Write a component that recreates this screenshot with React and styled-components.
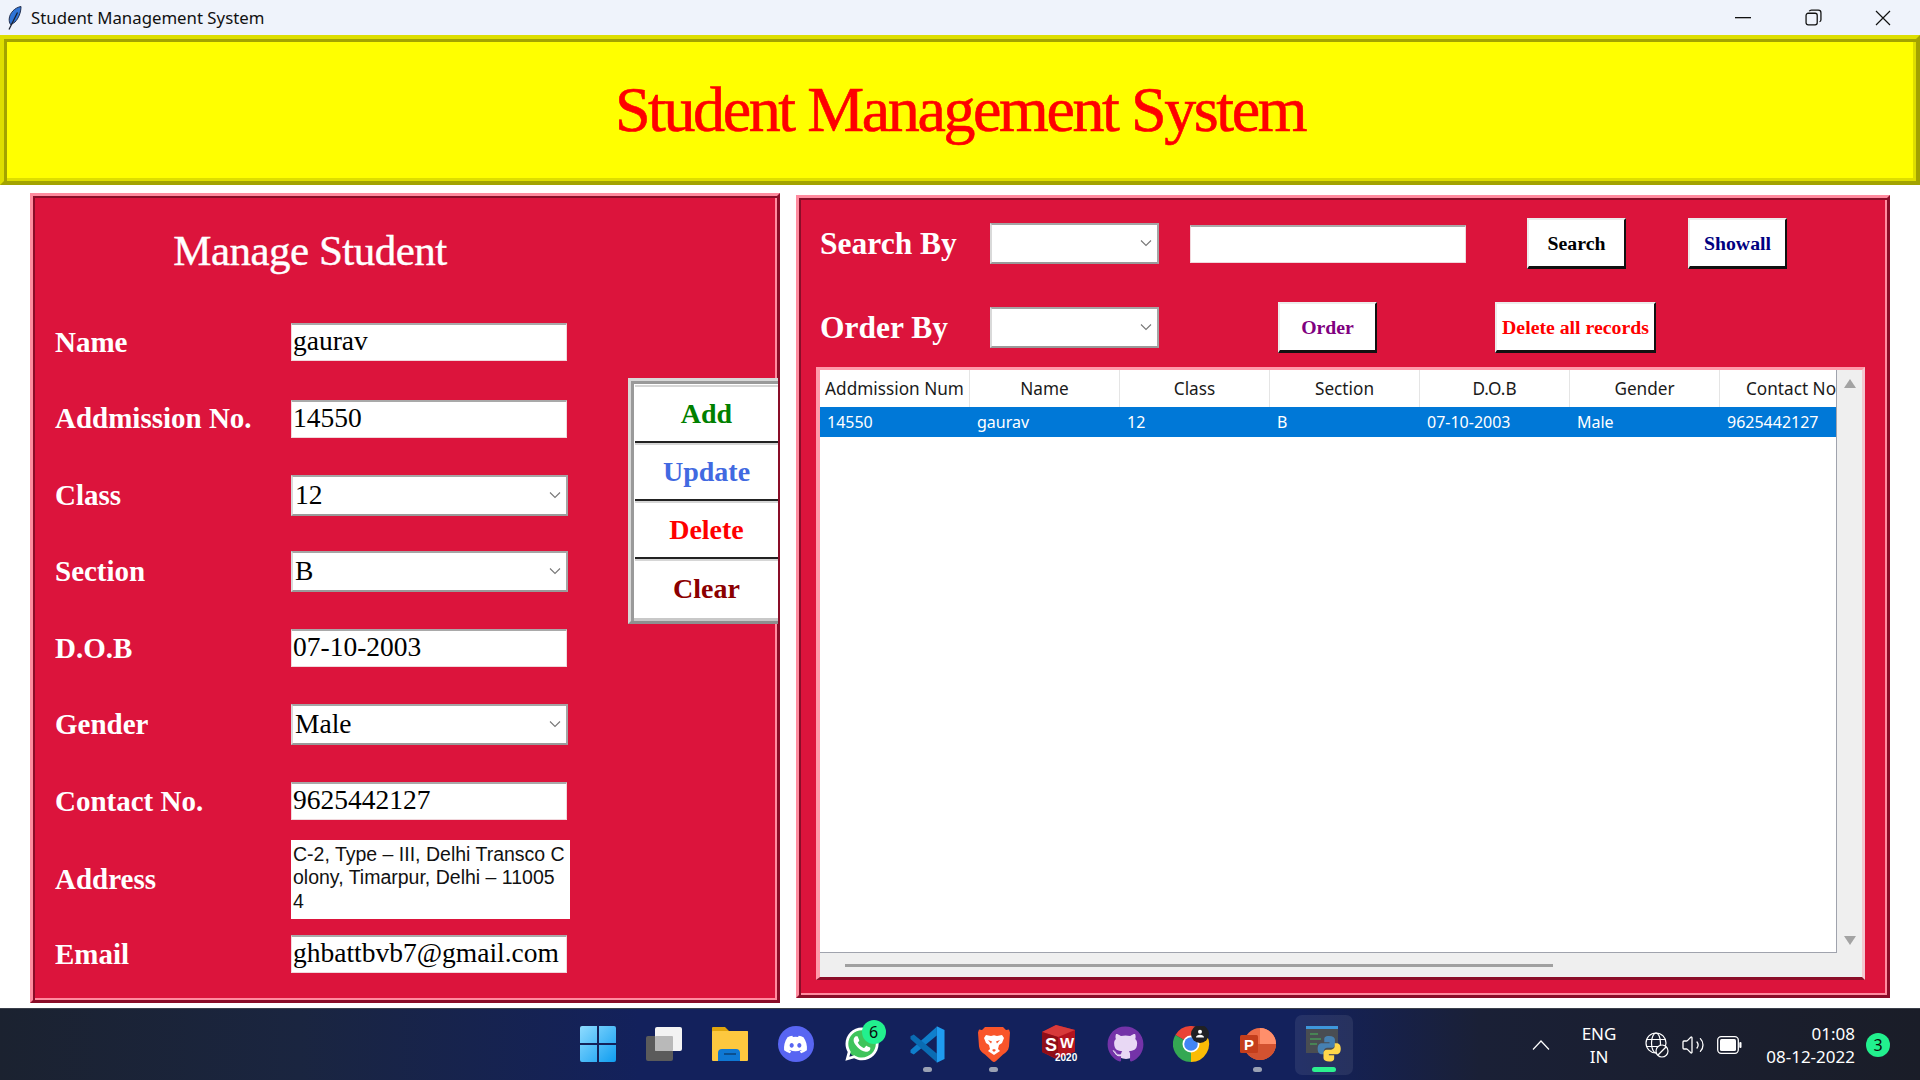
import React from "react";
import styled, { createGlobalStyle, css } from "styled-components";
import { FaDiscord, FaWhatsapp, FaGithub } from "react-icons/fa";
import { Volume2 } from "lucide-react";

const SERIF = '"Liberation Serif", "Times New Roman", serif';
const UI = '"Noto Sans", "Open Sans", sans-serif';

const GlobalStyle = createGlobalStyle`
  html, body { margin: 0; padding: 0; background: #fff; }
  #root { width: 1920px; height: 1080px; overflow: hidden; }
  * { box-sizing: border-box; }
`;

// tk style relief="ridge": light outside on top/left, dark just inside it
const ridge = (light, dark) => css`
  border: 3px solid;
  border-color: ${light} ${dark} ${dark} ${light};
  box-shadow: inset 2px 2px 0 ${dark}, inset -2px -2px 0 ${light};
`;

const Page = styled.div`
  width: 1920px;
  height: 1080px;
  display: flex;
  flex-direction: column;
  background: #fff;
`;

const TitleBar = styled.div`
  height: 35px;
  flex: none;
  display: flex;
  align-items: center;
  padding: 0 2px 0 7px;
  background: #eff3fb;
  font-family: ${UI};
  font-size: 16.8px;
  color: #111;
`;

const AppName = styled.span`
  margin-left: 8px;
  flex: 1;
`;

const WinControl = styled.div`
  width: 70px;
  height: 33px;
  display: flex;
  align-items: center;
  justify-content: center;
`;

const Header = styled.header`
  height: 150px;
  flex: none;
  display: flex;
  align-items: center;
  justify-content: center;
  background: #ffff00;
  border: 4px solid;
  border-color: #dede00 #a3a300 #a3a300 #dede00;
  box-shadow: inset 3px 3px 0 #a3a300, inset -3px -3px 0 #dede00;
  font-family: ${SERIF};
  font-size: 64px;
  letter-spacing: -2.4px;
  -webkit-text-stroke: 0.6px #ff0000;
  color: #ff0000;
`;

const Main = styled.main`
  flex: 1;
  min-height: 0;
  display: flex;
  align-items: flex-start;
  gap: 16px;
  padding-left: 30px;
`;

const LeftPanel = styled.section`
  width: 750px;
  height: 810px;
  margin-top: 8px;
  display: flex;
  align-items: flex-start;
  background: #dc143c;
  ${ridge("#ff8b9f", "#8a0d28")}
`;

const FormColumn = styled.div`
  width: 554px;
  flex: none;
`;

const PanelTitle = styled.h2`
  margin: 0;
  height: 108px;
  display: flex;
  align-items: center;
  justify-content: center;
  font-family: ${SERIF};
  font-weight: 400;
  font-size: 43px;
  letter-spacing: -0.5px;
  -webkit-text-stroke: 0.4px #fff;
  color: #fff;
`;

const FormRow = styled.div`
  height: 76.5px;
  display: grid;
  grid-template-columns: 236px 1fr;
  align-items: center;
  padding-left: 22px;
`;

const Label = styled.label`
  font-family: ${SERIF};
  font-weight: 700;
  font-size: 29px;
  color: #fff;
  white-space: nowrap;
`;

const Entry = styled.input`
  width: ${(p) => p.$width || 276}px;
  height: 38px;
  padding: 0 1px 3px;
  background: #fff;
  border: 1px solid #f1d7dc;
  border-top: 2px solid #a9a9a9;
  outline: none;
  font-family: ${SERIF};
  font-size: 27.5px;
  color: #000;
`;

const Combo = styled.div`
  width: ${(p) => p.$width || 277}px;
  height: 41px;
  flex: none;
  display: flex;
  align-items: center;
  justify-content: space-between;
  padding: 0 5px 1px 2px;
  background: #fff;
  border: 2px solid #a5a5a5;
  border-color: #a5a5a5 #a5a5a5 #9a9a9a #d9d9d9;
  font-family: ${SERIF};
  font-size: 27.5px;
  color: #000;
`;

const AddressBox = styled.div`
  width: 279px;
  height: 79px;
  padding: 3px 2px;
  background: #fff;
  font-family: "Liberation Sans", Arial, sans-serif;
  font-size: 19.5px;
  line-height: 23.5px;
  color: #111;
  white-space: nowrap;
`;

const ButtonFrame = styled.div`
  width: 150px;
  height: 246px;
  margin: 182px 0 0 41px;
  flex: none;
  display: flex;
  flex-direction: column;
  background: #fff;
  padding: 4px 0 4px 4px;
  border: 3px solid;
  border-color: #d8d8d8 transparent #8f8f8f #d8d8d8;
  border-right-width: 0;
  box-shadow: inset 3px 3px 0 #9a9a9a, inset 0 -3px 0 #c8c8c8;
`;

const ActionButton = styled.button`
  height: 58px;
  width: 100%;
  background: #fff;
  border: none;
  border-bottom: 2px solid #222;
  box-shadow: inset 0 -2px 0 #fff, inset 0 2px 0 #d6d6d6;
  font-family: ${SERIF};
  font-weight: 700;
  font-size: 28px;
  color: ${(p) => p.$color};
  padding: 2px 0 0;
  &:last-child {
    border-bottom: none;
  }
`;

const RightPanel = styled.section`
  width: 1094px;
  height: 803px;
  margin-top: 10px;
  padding: 20px 0 0 17px;
  background: #dc143c;
  ${ridge("#ff8b9f", "#8a0d28")}
`;

const ToolRow = styled.div`
  height: 51px;
  margin-bottom: 33px;
  padding-left: 4px;
  display: flex;
  align-items: center;
  &:nth-child(2) {
    margin-bottom: 14px;
  }
`;

const ToolLabel = styled.label`
  width: 170px;
  flex: none;
  font-family: ${SERIF};
  font-weight: 700;
  font-size: 31.5px;
  color: #fff;
  white-space: nowrap;
`;

const ToolButton = styled.button`
  width: ${(p) => p.$width || 99}px;
  height: 51px;
  flex: none;
  margin-left: ${(p) => p.$gap}px;
  padding: 0;
  background: #fff;
  border: 2px solid;
  border-color: #ececec #111 #111 #ececec;
  border-width: 2px 2px 3px 2px;
  font-family: ${SERIF};
  font-weight: 700;
  font-size: 19.8px;
  color: ${(p) => p.$color};
`;

const SearchEntry = styled(Entry)`
  margin-left: 31px;
`;

const TableFrame = styled.div`
  width: 1049px;
  height: 613px;
  display: grid;
  grid-template-columns: 1fr 25px;
  grid-template-rows: 1fr 24px;
  background: #efefef;
  border: 3px solid;
  border-left-width: 4px;
  border-color: #ff9aab #f4c7d0 #8a0d28 #ff9aab;
`;

const Tree = styled.div`
  min-width: 0;
  overflow: hidden;
  background: #fff;
  border-right: 1px solid #a0a3ad;
  border-bottom: 1px solid #a0a3ad;
  font-family: ${UI};
`;

const TreeRow = styled.div`
  display: grid;
  grid-template-columns: repeat(6, 150px) 142px;
  height: ${(p) => (p.$head ? 37 : 30)}px;
  align-items: center;
  color: ${(p) => (p.$head ? "#1a1a1a" : "#fff")};
  background: ${(p) => (p.$head ? "#fff" : "#0078d7")};
  font-size: ${(p) => (p.$head ? 17.2 : 16)}px;
`;

const HeadCell = styled.div`
  height: 100%;
  display: flex;
  align-items: center;
  justify-content: center;
  white-space: nowrap;
  border-right: 1px solid #e5e5e5;
  &:last-child {
    border-right: none;
  }
`;

const Cell = styled.div`
  padding-left: 7px;
  white-space: nowrap;
`;

const VScroll = styled.div`
  display: flex;
  flex-direction: column;
  justify-content: space-between;
  align-items: center;
  padding: 9px 0 8px;
  background: #efefef;
`;

const Arrow = styled.div`
  width: 0;
  height: 0;
  border-left: 6px solid transparent;
  border-right: 6px solid transparent;
  ${(p) =>
    p.$up
      ? "border-bottom: 9px solid #a3a3a3;"
      : "border-top: 9px solid #a3a3a3;"}
`;

const HScroll = styled.div`
  grid-column: 1 / 3;
  display: flex;
  align-items: center;
  padding-left: 25px;
  background: #efefef;
`;

const HThumb = styled.div`
  width: 708px;
  height: 3px;
  background: #a0a0a0;
`;

const TaskBar = styled.footer`
  height: 72px;
  margin-top: auto;
  flex: none;
  display: flex;
  align-items: center;
  padding-left: 564.5px;
  border-top: 1px solid #3a3f4a;
  background: linear-gradient(
    90deg,
    #1b2230 0,
    #1a2540 300px,
    #13215c 640px,
    #13215c 1300px,
    #1a2036 1480px,
    #1a1d28 1920px
  );
  font-family: ${UI};
  color: #fff;
`;

const Slot = styled.div`
  width: 66px;
  height: 60px;
  flex: none;
  position: relative;
  display: flex;
  align-items: center;
  justify-content: center;
  padding-bottom: 1px;
`;

const ActiveTile = styled.div`
  position: absolute;
  left: 4px;
  top: 0;
  width: 58px;
  height: 60px;
  border-radius: 7px;
  background: rgba(255, 255, 255, 0.08);
`;

const RunDot = styled.span`
  position: absolute;
  bottom: 3px;
  left: 50%;
  width: ${(p) => (p.$active ? 24 : 9)}px;
  height: 5px;
  margin-left: ${(p) => (p.$active ? -12 : -4.5)}px;
  border-radius: 3px;
  background: ${(p) => (p.$active ? "#2cf08f" : "#9aa1b3")};
`;

const Badge = styled.span`
  position: absolute;
  width: 24px;
  height: 24px;
  border-radius: 50%;
  display: flex;
  align-items: center;
  justify-content: center;
  background: #22f08e;
  color: #0a0a0a;
  font-size: 16px;
  ${(p) => p.$over && "right: 9px; top: 5px;"}
`;

const RoundIcon = styled.div`
  width: ${(p) => p.$size || 36}px;
  height: ${(p) => p.$size || 36}px;
  border-radius: 50%;
  display: flex;
  align-items: center;
  justify-content: center;
  background: ${(p) => p.$bg};
  color: ${(p) => p.$fg || "#fff"};
  position: relative;
  svg {
    flex: none;
  }
`;

const Tray = styled.div`
  display: flex;
  align-items: center;
  margin-left: 175.5px;
  height: 100%;
`;

const TraySlot = styled.div`
  width: ${(p) => p.$w}px;
  margin-left: ${(p) => p.$ml || 0}px;
  flex: none;
  display: flex;
  align-items: center;
  justify-content: center;
`;

const TwoLines = styled.div`
  width: ${(p) => p.$w}px;
  margin-left: ${(p) => p.$ml || 0}px;
  flex: none;
  display: flex;
  flex-direction: column;
  align-items: ${(p) => p.$align};
  gap: 2px;
  font-size: 17px;
  line-height: 21px;
`;

const Restore = () => (
  <svg width="17" height="17" viewBox="0 0 16 16" fill="none" stroke="#111" strokeWidth="1.2">
    <rect x="1" y="4" width="10.5" height="11" rx="2" />
    <path d="M4 2.2c.4-.8 1-1.2 2-1.2h6.5c1.5 0 2.5 1 2.5 2.5V10c0 1-.5 1.6-1.3 2" />
  </svg>
);

const Feather = () => (
  <svg width="16" height="24" viewBox="0 0 16 24">
    <path d="M14 .5C8 1.5 2.5 7 2.2 13c-.1 2 .3 4 1.3 5.5 1.5-.5 3-1.2 4.5-2.5 3.5-3.5 6-9.5 6-15.500z" fill="#2f74d6" stroke="#23304f" strokeWidth="1" />
    <path d="M10.5 6.5 2 23.5" stroke="#1a1f2e" strokeWidth="1.3" fill="none" />
  </svg>
);

const Chevron = ({ color = "#777" }) => (
  <svg width="12" height="8" viewBox="0 0 12 8" fill="none" stroke={color} strokeWidth="1.1">
    <path d="M1 1.5 6 6.5 11 1.5" />
  </svg>
);

const WindowsLogo = () => (
  <svg width="36" height="36" viewBox="0 0 36 36">
    <defs>
      <linearGradient id="winA" x1="0" y1="0" x2="1" y2="1">
        <stop offset="0" stopColor="#8fdcff" />
        <stop offset="1" stopColor="#0f9df0" />
      </linearGradient>
    </defs>
    <path d="M2 0h15v17H0V2a2 2 0 0 1 2-2zM19 0h15a2 2 0 0 1 2 2v15H19zM0 19h17v17H2a2 2 0 0 1-2-2zM19 19h17v15a2 2 0 0 1-2 2H19z" fill="url(#winA)" />
  </svg>
);

const TaskView = () => (
  <svg width="36" height="34" viewBox="0 0 36 34">
    <rect x="0" y="9" width="27" height="25" rx="2" fill="#5b5b5b" />
    <rect x="9" y="0" width="27" height="24" rx="2" fill="#f3f3f3" />
    <rect x="9" y="9" width="18" height="15" rx="1" fill="#b9b9b9" />
  </svg>
);

const Folder = () => (
  <svg width="36" height="34" viewBox="0 0 36 34">
    <path d="M1 0h12l4 4h18a1 1 0 0 1 1 1v6H0V1a1 1 0 0 1 1-1z" fill="#e0a50c" />
    <rect x="0" y="4" width="36" height="30" rx="1" fill="#fdc83f" />
    <path d="M6 34v-8a4 4 0 0 1 4-4h14a4 4 0 0 1 4 4v8z" fill="#0f78d4" />
    <rect x="12" y="26" width="12" height="2" fill="#0b4f8f" />
  </svg>
);

const VsCode = () => (
  <svg width="37" height="37" viewBox="0 0 100 100">
    <polygon points="75,26 75,2 4,65 4,72 13,77" fill="#0f7fcc" />
    <polygon points="75,74 75,98 4,35 4,28 13,23" fill="#0a6cb3" />
    <polygon points="75,1 96,11 96,89 75,99" fill="#1f9cf0" />
  </svg>
);

const Brave = () => (
  <svg width="32" height="37" viewBox="0 0 32 37">
    <path d="M7 1h18l3 3 3-.5 1 3-1 14c-.5 4-3 6-6 8l-7 6.5a3 3 0 0 1-4 0L7 28.5c-3-2-5.500-4-6-8L0 6.500l1-3 3 .5z" fill="#f9552a" />
    <path d="M8 9l5 1 3-.8 3 .8 5-1 2 3-2 5-3 2-1 4 2 2-6 4-6-4 2-2-1-4-3-2-2-5z" fill="#fff" />
    <path d="M10 14l4 1.5-1 2zM22 14l-4 1.5 1 2zM14 24l2-1 2 1-2 2z" fill="#f9552a" />
  </svg>
);

const SolidWorks = () => (
  <svg width="36" height="38" viewBox="0 0 36 38" fontFamily='"Liberation Sans", sans-serif' fontWeight="700">
    <path d="M0 7 14 0l19 5v22L14 34 0 27z" fill="#b3141f" />
    <path d="M0 7 14 0l19 5-17 7z" fill="#d83a3a" />
    <path d="M0 7l16 5v22L0 27z" fill="#8f0e17" />
    <text x="3" y="26" fontSize="18" fill="#fff">S</text>
    <text x="18" y="23" fontSize="15" fill="#fff">W</text>
    <text x="13" y="36" fontSize="10" fill="#fff">2020</text>
  </svg>
);

const Chrome = () => (
  <svg width="38" height="36" viewBox="0 0 38 36">
    <path d="M18 18 2.4 9A18 18 0 0 1 33.6 9z" fill="#ea4335" />
    <path d="M18 18 33.6 9A18 18 0 0 1 18 36z" fill="#fbbc05" />
    <path d="M18 18V36A18 18 0 0 1 2.4 9z" fill="#34a853" />
    <circle cx="18" cy="18" r="8.5" fill="#fff" />
    <circle cx="18" cy="18" r="6.8" fill="#4285f4" />
    <circle cx="27" cy="8" r="9" fill="#202124" />
    <circle cx="27" cy="5.8" r="2" fill="#fff" />
    <path d="M23 11.5c0-2 2-2.8 4-2.8s4 .8 4 2.8z" fill="#fff" />
  </svg>
);

const PowerPoint = () => (
  <svg width="36" height="32" viewBox="0 0 36 32">
    <circle cx="20" cy="16" r="16" fill="#ed6c47" />
    <path d="M20 0a16 16 0 0 1 16 16H20z" fill="#ff8f6b" />
    <path d="M36 16a16 16 0 0 1-32 0z" fill="#d35230" />
    <rect x="0" y="7" width="18" height="18" rx="1.5" fill="#c43e1c" />
    <text x="4" y="22" fontSize="15" fontWeight="700" fill="#fff" fontFamily='"Liberation Sans", sans-serif'>P</text>
  </svg>
);

const PythonApp = () => (
  <svg width="36" height="36" viewBox="0 0 36 36">
    <rect x="0" y="0" width="32" height="27" fill="#3a3e44" />
    <rect x="0" y="0" width="32" height="3" fill="#2e8fd8" />
    <path d="M4 8h8M4 13h11M4 18h7" stroke="#39b54a" strokeWidth="1.2" />
    <g transform="translate(10 9) scale(1.1)">
      <path d="M12 1c-4.5 0-4.5 1.8-4.5 3.2V6.5H12.3v1H5.5C3.2 7.5 1.5 9 1.5 12.5s1.7 5 3.8 5H7v-2.5c0-1.8 1.6-3.3 3.3-3.3h4c1.6 0 2.9-1.3 2.9-2.9V4.2C17.2 2.4 15.3 1 12 1z" fill="#3776ab" />
      <path transform="rotate(180 12 12.5)" d="M12 1c-4.5 0-4.5 1.8-4.5 3.2V6.5H12.3v1H5.5C3.2 7.5 1.5 9 1.5 12.5s1.7 5 3.8 5H7v-2.5c0-1.8 1.6-3.3 3.3-3.3h4c1.6 0 2.9-1.3 2.9-2.9V4.2C17.2 2.4 15.3 1 12 1z" fill="#ffd43b" />
    </g>
  </svg>
);

const GlobeBlocked = () => (
  <svg width="24" height="26" viewBox="0 0 24 26" fill="none" stroke="#fff" strokeWidth="1.2">
    <circle cx="11" cy="11" r="10" />
    <ellipse cx="11" cy="11" rx="4.5" ry="10" />
    <path d="M1.5 7.5h19M1.5 14.5h19" />
    <circle cx="17" cy="19" r="6" fill="#1a1e2c" />
    <path d="M13 23l8-8" />
  </svg>
);

const BatteryIcon = () => (
  <svg width="25" height="18" viewBox="0 0 25 18">
    <rect x="0.7" y="0.7" width="20.6" height="16.6" rx="3.5" fill="none" stroke="#fff" strokeWidth="1.3" />
    <rect x="3" y="3" width="16" height="12" rx="1.5" fill="#fff" />
    <rect x="22.3" y="6" width="2.2" height="6" rx="1" fill="#fff" />
  </svg>
);

const fields = [
  { label: "Name", value: "gaurav" },
  { label: "Addmission No.", value: "14550" },
  { label: "Class", value: "12", combo: true },
  { label: "Section", value: "B", combo: true },
  { label: "D.O.B", value: "07-10-2003" },
  { label: "Gender", value: "Male", combo: true },
  { label: "Contact No.", value: "9625442127" },
  { label: "Address", lines: ["C-2, Type – III, Delhi Transco C", "olony, Timarpur, Delhi – 11005", "4"] },
  { label: "Email", value: "ghbattbvb7@gmail.com" },
];

const actions = [
  { text: "Add", color: "#008000" },
  { text: "Update", color: "#4169e1" },
  { text: "Delete", color: "#ff0000" },
  { text: "Clear", color: "#8b0000" },
];

const columns = ["Addmission Num", "Name", "Class", "Section", "D.O.B", "Gender", "Contact No"];
const record = ["14550", "gaurav", "12", "B", "07-10-2003", "Male", "9625442127"];

const App = () => {
  return (
    <Page>
      <GlobalStyle />
      <TitleBar>
        <Feather />
        <AppName>Student Management System</AppName>
        <WinControl>
          <svg width="16" height="2"><rect width="16" height="1.3" fill="#111" /></svg>
        </WinControl>
        <WinControl><Restore /></WinControl>
        <WinControl>
          <svg width="16" height="16" stroke="#111" strokeWidth="1.2"><path d="M1 1l14 14M15 1 1 15" /></svg>
        </WinControl>
      </TitleBar>

      <Header>Student Management System</Header>

      <Main>
        <LeftPanel>
          <FormColumn>
            <PanelTitle>Manage Student</PanelTitle>
            {fields.map((f) => (
              <FormRow key={f.label}>
                <Label>{f.label}</Label>
                {f.lines ? (
                  <AddressBox>
                    {f.lines.map((l) => (
                      <div key={l}>{l}</div>
                    ))}
                  </AddressBox>
                ) : f.combo ? (
                  <Combo>
                    {f.value}
                    <Chevron />
                  </Combo>
                ) : (
                  <Entry readOnly value={f.value} />
                )}
              </FormRow>
            ))}
          </FormColumn>
          <ButtonFrame>
            {actions.map((a) => (
              <ActionButton key={a.text} $color={a.color}>
                {a.text}
              </ActionButton>
            ))}
          </ButtonFrame>
        </LeftPanel>

        <RightPanel>
          <ToolRow>
            <ToolLabel>Search By</ToolLabel>
            <Combo $width={169}>
              <span />
              <Chevron />
            </Combo>
            <SearchEntry readOnly value="" />
            <ToolButton $gap={61} $color="#000">Search</ToolButton>
            <ToolButton $gap={62} $color="#000080">Showall</ToolButton>
          </ToolRow>
          <ToolRow>
            <ToolLabel>Order By</ToolLabel>
            <Combo $width={169}>
              <span />
              <Chevron />
            </Combo>
            <ToolButton $gap={119} $color="#800080">Order</ToolButton>
            <ToolButton $gap={118} $width={161} $color="#ff0000">Delete all records</ToolButton>
          </ToolRow>
          <TableFrame>
            <Tree>
              <TreeRow $head>
                {columns.map((c) => (
                  <HeadCell key={c}>{c}</HeadCell>
                ))}
              </TreeRow>
              <TreeRow>
                {record.map((v) => (
                  <Cell key={v}>{v}</Cell>
                ))}
              </TreeRow>
            </Tree>
            <VScroll>
              <Arrow $up />
              <Arrow />
            </VScroll>
            <HScroll>
              <HThumb />
            </HScroll>
          </TableFrame>
        </RightPanel>
      </Main>

      <TaskBar>
        <Slot><WindowsLogo /></Slot>
        <Slot><TaskView /></Slot>
        <Slot><Folder /></Slot>
        <Slot>
          <RoundIcon $bg="#5865f2"><FaDiscord size={25} /></RoundIcon>
        </Slot>
        <Slot>
          <RoundIcon $bg="#3fc45b" $size={30}><FaWhatsapp size={38} /></RoundIcon>
          <Badge $over>6</Badge>
        </Slot>
        <Slot><VsCode /><RunDot /></Slot>
        <Slot><Brave /><RunDot /></Slot>
        <Slot><SolidWorks /></Slot>
        <Slot>
          <RoundIcon $bg="#e8d8f4" $size={30} $fg="#7433a8"><FaGithub size={37} /></RoundIcon>
        </Slot>
        <Slot><Chrome /></Slot>
        <Slot><PowerPoint /><RunDot /></Slot>
        <Slot>
          <ActiveTile />
          <PythonApp />
          <RunDot $active />
        </Slot>

        <Tray>
          <TraySlot $w={18}>
            <svg width="18" height="10" fill="none" stroke="#fff" strokeWidth="1.2"><path d="M1 9.5 9 1l8 8.5" /></svg>
          </TraySlot>
          <TwoLines $w={48} $ml={25} $align="center">
            <span>ENG</span>
            <span>IN</span>
          </TwoLines>
          <TraySlot $w={36} $ml={16}><GlobeBlocked /></TraySlot>
          <TraySlot $w={36}><Volume2 size={24} strokeWidth={1.3} /></TraySlot>
          <TraySlot $w={36}><BatteryIcon /></TraySlot>
          <TwoLines $w={108} $align="flex-end">
            <span>01:08</span>
            <span>08-12-2022</span>
          </TwoLines>
          <TraySlot $w={24} $ml={11}>
            <Badge>3</Badge>
          </TraySlot>
        </Tray>
      </TaskBar>
    </Page>
  );
};

export default App;
